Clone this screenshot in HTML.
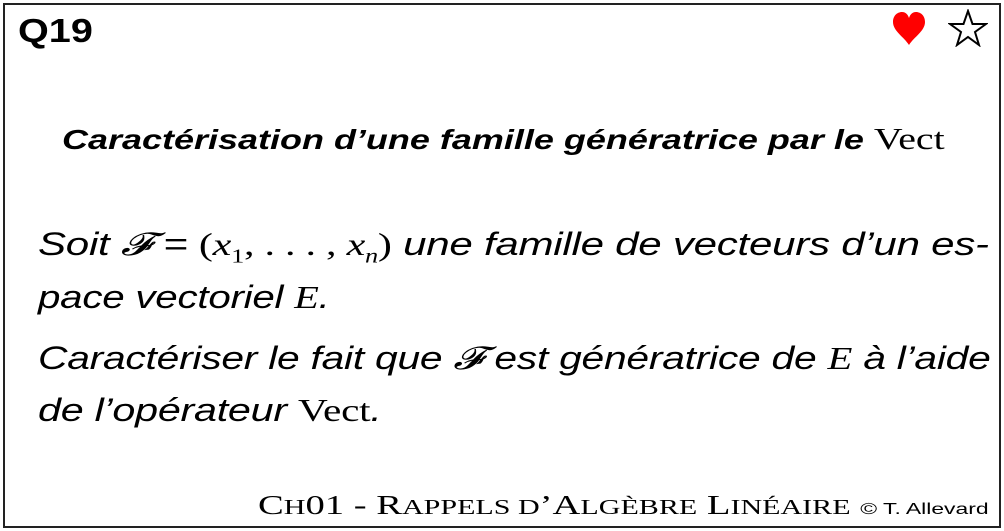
<!DOCTYPE html>
<html><head><meta charset="utf-8"><style>
html,body{margin:0;padding:0;width:1004px;height:531px;background:#fff;overflow:hidden}
.f{position:absolute;left:3px;top:3px;width:994px;height:521px;border:2px solid #222}
.a{position:absolute;white-space:nowrap;font-family:"Liberation Sans",sans-serif;color:#000;transform-origin:0 0}
.s{font-family:"Liberation Serif",serif;font-style:normal}
.m{font-family:"Liberation Serif",serif;font-style:italic}
.t{font-style:italic;font-size:32px;letter-spacing:-0.2px}
</style></head><body>
<div class="f"></div>
<div class="a" style="left:18px;top:12px;font-size:33px;font-weight:bold;transform:scaleX(1.2)">Q19</div>
<svg class="a" style="left:890px;top:10px" width="38" height="36" viewBox="0 0 38 36"><path d="M19 35 C14 27 3 21 3 12 C3 5 8 2 12 2 C16 2 18 5 19 8 C20 5 22 2 26 2 C30 2 35 5 35 12 C35 21 24 27 19 35Z" fill="#f00"/></svg>
<svg class="a" style="left:948px;top:9px" width="40" height="38" viewBox="0 0 40 38"><path d="M20 2 L24.5 15 L38 15 L27 23 L31 36 L20 28 L9 36 L13 23 L2 15 L15.5 15 Z" fill="none" stroke="#000" stroke-width="2"/></svg>
<div class="a" style="left:62px;top:121px;font-size:28px;font-weight:bold;font-style:italic;transform:scaleX(1.285)">Caractérisation d’une famille génératrice par le <span class="s" style="font-weight:normal;font-size:31px">Vect</span></div>
<div class="a t" style="left:38px;top:226px;transform:scaleX(1.315)">Soit <span class="m">𝓕</span> = <span class="s">(</span><span class="m">x</span><sub class="s" style="font-size:20px">1</sub><span class="s">, . . . , </span><span class="m">x<sub style="font-size:20px">n</sub></span><span class="s">)</span> une famille de vecteurs d’un es-</div>
<div class="a t" style="left:38px;top:279px;transform:scaleX(1.26)">pace vectoriel <span class="m">E</span>.</div>
<div class="a t" style="left:38px;top:340px;transform:scaleX(1.275)">Caractériser le fait que <span class="m">𝓕</span> est génératrice de <span class="m">E</span> à l’aide</div>
<div class="a t" style="left:38px;top:392px;transform:scaleX(1.29)">de l’opérateur <span class="s">Vect</span>.</div>
<div class="a s" style="left:258px;top:490px;font-size:27px;transform:scaleX(1.43)">C<span style="font-size:21px">H</span>01 - R<span style="font-size:21px">APPELS D</span>’A<span style="font-size:21px">LGÈBRE</span> L<span style="font-size:21px">INÉAIRE</span> <span style="font-family:'Liberation Sans',sans-serif;font-size:16px">© T. Allevard</span></div>
</body></html>
